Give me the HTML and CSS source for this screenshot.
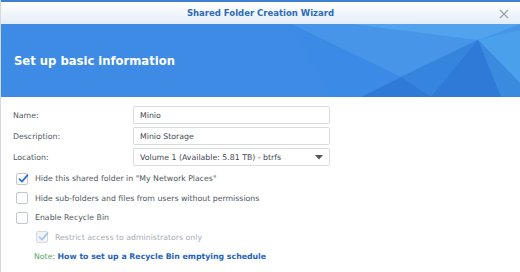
FILE: index.html
```html
<!DOCTYPE html>
<html>
<head>
<meta charset="utf-8">
<link rel="stylesheet" href="styles.css">
</head>
<body>
<div class="window">
  <div class="titlebar">
    <span class="title">Shared Folder Creation Wizard</span>
    <svg class="close" width="10" height="10" viewBox="0 0 10 10"><path d="M1 1 L9 9 M9 1 L1 9" stroke="#9aa3ad" stroke-width="1.3" fill="none"/></svg>
  </div>
  <div class="banner">
    <svg class="banner-art" width="520" height="73" viewBox="0 0 520 73" preserveAspectRatio="none">
      <polygon points="290,0 520,0 520,10 477,16 400,53" fill="#4a9ae9" opacity="0.7"/>
      <polygon points="350,0 520,0 477,16" fill="#52a6ec" opacity="0.8"/>
      <polygon points="400,53 477,16 440,40" fill="#5bb0ee" opacity="0.9"/>
      <polygon points="360,73 400,53 477,16 520,73" fill="#2f7ad6"/>
      <polygon points="400,53 477,16 430,73" fill="#3584dd"/>
      <polygon points="477,16 520,6 520,60" fill="#4aa0ea"/>
      <polygon points="477,16 520,60 520,73 500,73" fill="#3a8ae0"/>
      <polygon points="290,0 330,73 360,73 400,53" fill="#3b8be5" opacity="0.6"/>
    </svg>
    <h1 class="banner-title">Set up basic information</h1>
  </div>
  <div class="body">
    <div class="field">
      <label class="label">Name:</label>
      <div class="input">Minio</div>
    </div>
    <div class="field">
      <label class="label">Description:</label>
      <div class="input">Minio Storage</div>
    </div>
    <div class="field">
      <label class="label">Location:</label>
      <div class="input select">Volume 1 (Available: 5.81 TB) - btrfs
        <svg class="caret" width="8" height="5" viewBox="0 0 8 5"><path d="M0 0 L8 0 L4 4.5 Z" fill="#555"/></svg>
      </div>
    </div>
    <div class="checks">
      <div class="check-row">
        <span class="box checked">
          <svg width="12" height="12" viewBox="0 0 12 12"><path d="M2.5 6.2 L5 8.6 L10.5 2.2" stroke="#2a73d4" stroke-width="1.8" fill="none" stroke-linecap="round" stroke-linejoin="round"/></svg>
        </span>
        <span class="check-text">Hide this shared folder in "My Network Places"</span>
      </div>
      <div class="check-row">
        <span class="box"></span>
        <span class="check-text">Hide sub-folders and files from users without permissions</span>
      </div>
      <div class="check-row">
        <span class="box"></span>
        <span class="check-text">Enable Recycle Bin</span>
      </div>
      <div class="check-row sub disabled">
        <span class="box checked">
          <svg width="12" height="12" viewBox="0 0 12 12"><path d="M2.5 6.2 L5 8.6 L10.5 2.2" stroke="#a9c8ec" stroke-width="1.8" fill="none" stroke-linecap="round" stroke-linejoin="round"/></svg>
        </span>
        <span class="check-text">Restrict access to administrators only</span>
      </div>
      <div class="note-row">
        <span class="note">Note:</span> <a class="link">How to set up a Recycle Bin emptying schedule</a>
      </div>
    </div>
  </div>
</div>
</body>
</html>
```
FILE: styles.css
```css
html, body {
  margin: 0;
  padding: 0;
  background: #ffffff;
}
body {
  width: 520px;
  height: 272px;
  overflow: hidden;
  font-family: "DejaVu Sans", Verdana, sans-serif;
}
.window {
  border-left: 1px solid #d4d8dd;
  height: 272px;
  display: flex;
  flex-direction: column;
}
.titlebar {
  height: 22px;
  border-top: 2px solid #3f7fd3;
  background: linear-gradient(#ffffff, #e4edf8);
  display: flex;
  align-items: center;
  justify-content: center;
  position: relative;
}
.title {
  font-size: 8.5px;
  font-weight: bold;
  color: #2c6bb6;
}
.close {
  position: absolute;
  right: 11px;
  top: 7px;
}
.banner {
  height: 73px;
  background: #3d8be5;
  position: relative;
  display: flex;
  align-items: center;
}
.banner-art {
  position: absolute;
  left: 0;
  top: 0;
}
.banner-title {
  position: relative;
  margin: 0 0 0 13px;
  font-size: 11.6px;
  font-weight: bold;
  color: #ffffff;
}
.body {
  padding: 9px 0 0 12px;
  font-size: 7.8px;
  color: #505860;
}
.field {
  display: flex;
  align-items: center;
  height: 18px;
  margin-bottom: 3px;
}
.label {
  width: 120px;
}
.input {
  width: 185px;
  height: 16px;
  border: 1px solid #d9dcdf;
  border-radius: 2px;
  padding: 0 4px 0 6px;
  display: flex;
  align-items: center;
  color: #41474e;
}
.select {
  justify-content: space-between;
}
.caret {
  margin-right: 2px;
}
.checks {
  margin-top: 0;
  padding-left: 3px;
}
.check-row, .note-row {
  display: flex;
  align-items: center;
  height: 19.5px;
}
.box {
  width: 10px;
  height: 10px;
  border: 1px solid #c4c8cc;
  border-radius: 2px;
  margin-right: 7px;
  position: relative;
  background: #fff;
}
.box svg {
  position: absolute;
  left: 0;
  top: -1px;
}
.sub {
  padding-left: 20px;
}
.disabled .box {
  background: #f1f3f5;
  border-color: #d6dade;
}
.disabled .check-text {
  color: #a7adb3;
}
.note-row {
  padding-left: 18px;
  display: block;
  line-height: 19.5px;
}
.note {
  color: #5aa36a;
}
.link {
  color: #1e63b9;
  font-weight: bold;
}
```
